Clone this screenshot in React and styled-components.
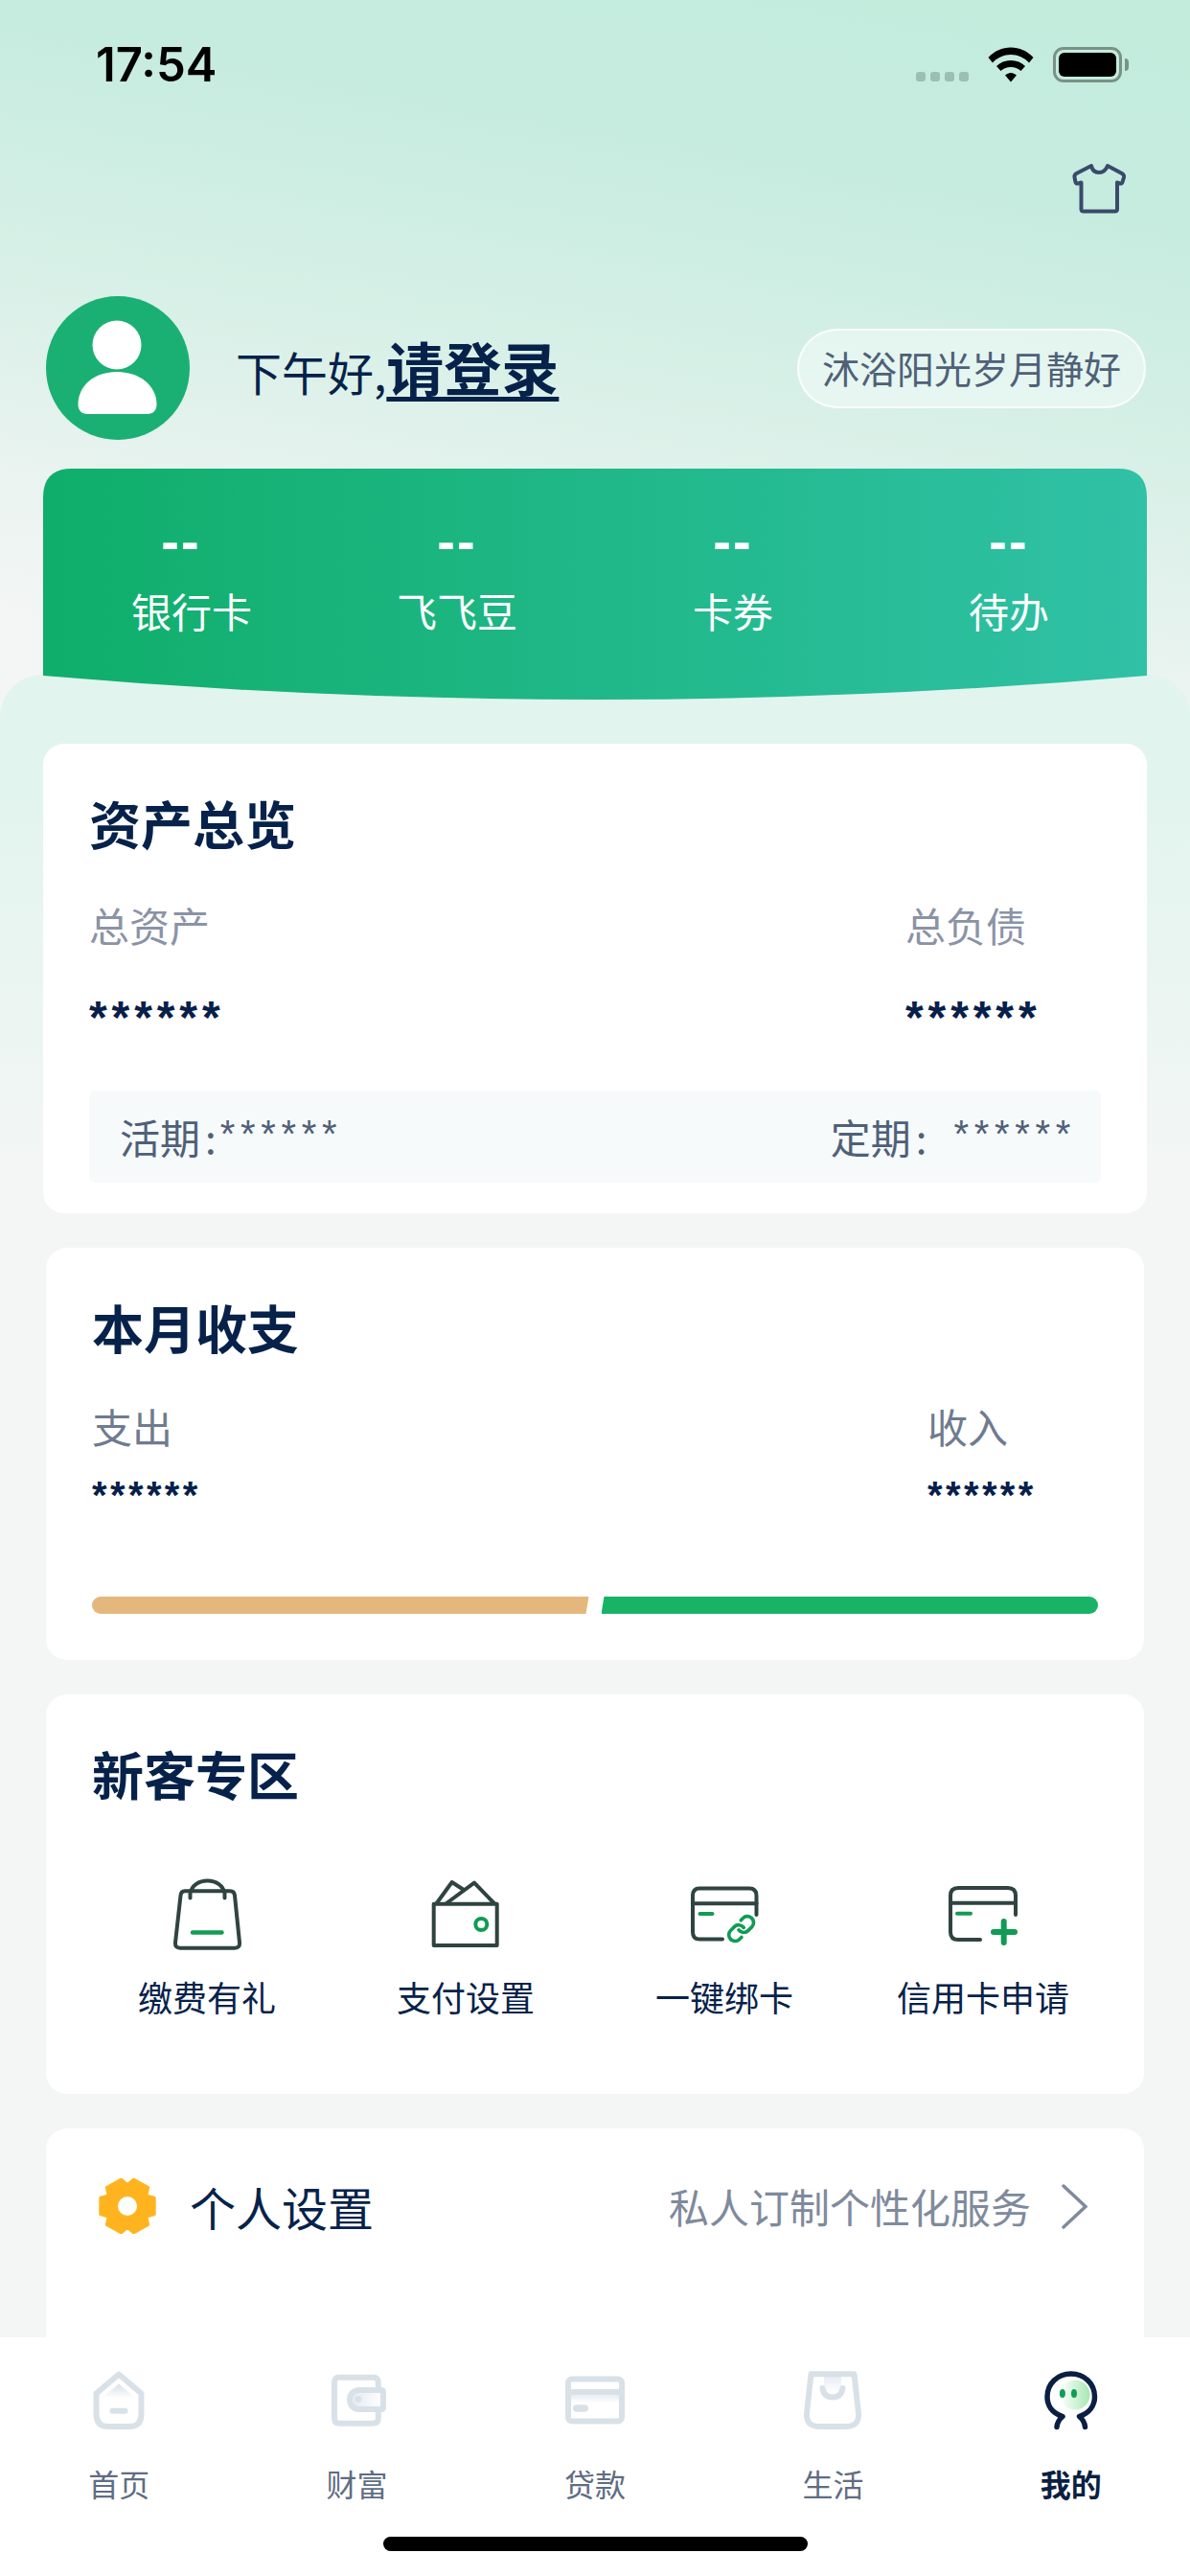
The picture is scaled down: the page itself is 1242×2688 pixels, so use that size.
import React from 'react'
import styled, { createGlobalStyle } from 'styled-components'

const GlobalStyle = createGlobalStyle`
  html, body {
    margin: 0;
    padding: 0;
    background: #f4f6f5;
  }
  * {
    box-sizing: border-box;
  }
  body {
    font-family: "Noto Sans CJK SC", "Noto Sans", sans-serif;
    color: #06224a;
  }
`

const navy = '#06224a'
const iconDark = '#2f4440'
const iconGreen = '#109c52'
const tabGrey = '#d9e1e8'

const Page = styled.div`
  width: 1242px;
  height: 2688px;
  display: flex;
  flex-direction: column;
  overflow: hidden;
  background:
    linear-gradient(190deg, #c3ecdd 0, #c6ecdf 230px, #d8f0e7 490px, #e9f3ef 690px, #f4f6f5 860px) no-repeat;
  background-size: 100% 900px;
  background-color: #f4f6f5;
`

const Main = styled.main`
  flex: 1;
  min-height: 0;
  overflow: hidden;
`

const StatusBar = styled.div`
  height: 130px;
  padding: 44px 71px 0 100px;
  display: flex;
  justify-content: space-between;
  align-items: flex-start;
`

const Time = styled.div`
  font-family: Inter, "Liberation Sans", sans-serif;
  font-weight: 600;
  font-size: 49px;
  line-height: 48px;
  color: #000;
`

const StatusIcons = styled.div`
  display: flex;
  align-items: flex-start;
  padding-top: 5px;
`

const SignalDots = styled.div`
  display: flex;
  gap: 5px;
  margin: 26px 20px 0 0;
`

const SignalDot = styled.span`
  width: 10px;
  height: 10px;
  border-radius: 3px;
  background: #9dbfb2;
`

const Battery = styled.div`
  position: relative;
  width: 72px;
  height: 37px;
  margin-left: 20px;
  padding: 3px;
  border: 3px solid #7a9186;
  border-radius: 11px;

  &::before {
    content: '';
    display: block;
    height: 100%;
    background: #000;
    border-radius: 6px;
  }

  &::after {
    content: '';
    position: absolute;
    right: -10px;
    top: 9px;
    width: 4px;
    height: 13px;
    background: #7a9186;
    border-radius: 0 4px 4px 0;
  }
`

const ActionRow = styled.div`
  margin-top: 40px;
  height: 52px;
  padding-right: 68px;
  display: flex;
  justify-content: flex-end;
`

const Profile = styled.section`
  margin-top: 87px;
  height: 150px;
  padding: 0 48px;
  display: flex;
  align-items: center;
`

const Avatar = styled.div`
  width: 150px;
  height: 150px;
  flex: none;
  border-radius: 50%;
  background: #1bb073;
  display: flex;
  align-items: center;
  justify-content: center;
`

const Greeting = styled.div`
  margin: 0 0 0 48px;
  font-size: 48px;
  line-height: 60px;
  color: ${navy};
  flex: 1;
  white-space: nowrap;
`

const Login = styled.a`
  font-size: 60px;
  font-weight: 700;
  color: ${navy};
  text-decoration: underline;
  text-decoration-thickness: 5px;
  text-underline-offset: 6px;
`

const MoodPill = styled.div`
  height: 83px;
  width: 364px;
  margin-right: -2px;
  padding-bottom: 3px;
  display: flex;
  align-items: center;
  justify-content: center;
  border: 2px solid rgba(255, 255, 255, 0.85);
  border-radius: 42px;
  background: rgba(255, 255, 255, 0.42);
  font-size: 39px;
  color: #4f6078;
`

const StatCard = styled.section`
  position: relative;
  z-index: 1;
  margin: 30px 45px 0;
  height: 241px;
  padding-top: 53px;
  display: grid;
  grid-template-columns: repeat(4, 1fr);
  align-content: start;
  background: linear-gradient(90deg, #0fae6a, #30c1a6);
  clip-path: path('M0 30 Q0 0 30 0 H1122 Q1152 0 1152 30 V216 Q576 266 0 216 Z');
`

const Stat = styled.div`
  display: flex;
  flex-direction: column;
  align-items: center;
  color: #fff;
`

const StatValue = styled.div`
  font-family: "Liberation Sans", sans-serif;
  font-weight: 700;
  font-size: 56px;
  line-height: 46px;
  letter-spacing: 2px;
`

const StatLabel = styled.div`
  margin-top: 19px;
  margin-left: ${({ $shift }) => $shift || 0}px;
  font-size: 42px;
  line-height: 60px;
`

const Sheet = styled.div`
  position: relative;
  margin-top: -26px;
  padding: 72px 45px 0;
  display: flex;
  flex-direction: column;
  gap: 36px;

  &::before {
    content: '';
    position: absolute;
    top: 0;
    left: 0;
    right: 0;
    height: 549px;
    border-radius: 44px;
    background: linear-gradient(180deg, #e2f4ee 0, #e2f4ee 120px, #f4f6f5 549px);
  }
`

const Card = styled.section`
  position: relative;
  margin: 0 ${({ $wide }) => ($wide ? 0 : 3)}px;
  height: ${({ $height }) => $height}px;
  padding: 50px 48px 0;
  background: #fff;
  border-radius: 22px;
`

const CardTitle = styled.h2`
  margin: 0;
  font-size: 54px;
  line-height: 66px;
  font-weight: 700;
  color: ${navy};
`

const Amounts = styled.div`
  display: grid;
  grid-template-columns: ${({ $left }) => $left}px auto;
  margin-top: ${({ $top }) => $top}px;
`

const AmountLabel = styled.div`
  font-size: 42px;
  line-height: 60px;
  color: ${({ $dark }) => ($dark ? '#6f7b8f' : '#8a93a6')};
`

const Stars = styled.div`
  margin-top: ${({ $top }) => $top}px;
  font-family: "Liberation Sans", sans-serif;
  font-weight: 700;
  font-size: ${({ $size }) => $size}px;
  line-height: 40px;
  letter-spacing: ${({ $spacing }) => $spacing}px;
  color: #06204a;
`

const DepositPanel = styled.div`
  margin-top: 56px;
  height: 96px;
  padding: 0 31px 0 32px;
  display: flex;
  justify-content: space-between;
  align-items: center;
  background: #f6fafa;
  border-radius: 6px;
  font-size: 42px;
  color: #4f6078;
`

const Deposit = styled.div`
  display: flex;
  align-items: center;
  line-height: 60px;
`

const Colon = styled.span`
  margin-left: 5px;
`

const DepositStars = styled.span`
  margin-left: ${({ $gap }) => $gap}px;
  margin-right: -5px;
  position: relative;
  top: -3px;
  font-family: "Liberation Sans", sans-serif;
  font-size: 40px;
  letter-spacing: 5.7px;
`

const FlowBar = styled.div`
  margin-top: 86px;
  display: flex;
  gap: 13px;
`

const FlowSegment = styled.div`
  flex: 1;
  height: 18px;
  background: ${({ $tone }) => $tone};
  border-radius: ${({ $end }) => ($end ? '0 9px 9px 0' : '9px 0 0 9px')};
  clip-path: ${({ $end }) =>
    $end
      ? 'polygon(3px 0, 100% 0, 100% 100%, 0 100%)'
      : 'polygon(0 0, 100% 0, calc(100% - 3px) 100%, 0 100%)'};
`

const EntryGrid = styled.div`
  margin: 74px -15px 0;
  display: grid;
  grid-template-columns: repeat(4, 270px);
`

const Entry = styled.div`
  display: flex;
  flex-direction: column;
  align-items: center;
`

const EntryLabel = styled.div`
  margin-top: 20px;
  font-size: 36px;
  line-height: 50px;
  color: ${navy};
  white-space: nowrap;
`

const SettingsRow = styled.div`
  margin: -2px 11px 0 6px;
  display: flex;
  align-items: center;
  height: 66px;
`

const SettingsTitle = styled.div`
  margin-left: 34px;
  flex: 1;
  font-size: 48px;
  line-height: 60px;
  color: ${navy};
`

const SettingsHint = styled.div`
  font-size: 42px;
  line-height: 60px;
  color: #7f8a9d;
`

const Chevron = styled.svg`
  margin-left: 32px;
  flex: none;
`

const TabBar = styled.nav`
  height: 249px;
  flex: none;
  background: #fff;
  padding-top: 33px;
  position: relative;
  z-index: 2;
`

const TabGrid = styled.div`
  display: grid;
  grid-template-columns: repeat(5, 1fr);
`

const Tab = styled.div`
  display: flex;
  flex-direction: column;
  align-items: center;
`

const TabLabel = styled.div`
  margin-top: 33px;
  font-size: 32px;
  line-height: 44px;
  font-weight: ${({ $active }) => ($active ? 700 : 400)};
  color: ${({ $active }) => ($active ? '#0b1f42' : '#5f6d82')};
`

const HomeBar = styled.div`
  width: 443px;
  height: 15px;
  margin: 34px auto 0;
  border-radius: 8px;
  background: #000;
`

const WifiIcon = () => (
  <svg width="48" height="37" viewBox="0 0 48 37">
    <path d="M0.5 11C7 4 15 0.5 24 0.5C33 0.5 41 4 47.5 11L43 16.5C38 11 31 8 24 8C17 8 10 11 5 16.5Z" />
    <path d="M9 20C13 16 18 14 24 14C30 14 35 16 39 20L34.5 25C31.5 22.5 28 21 24 21C20 21 16.5 22.5 13.5 25Z" />
    <path d="M18 29.5C20 28 22 27 24 27C26 27 28 28 30 29.5L24 36.5Z" />
  </svg>
)

const ShirtIcon = () => (
  <svg width="54" height="52" viewBox="0 0 54 52" fill="none" stroke="#3a4a6b" strokeWidth="4" strokeLinejoin="round" overflow="visible">
    <path d="M19 3C20 8 23 10 27 10C31 10 34 8 36 3L51 11Q53.5 12.5 53 15L51.5 20Q51 22 49 21.5L46 20.5V48Q46 50.5 43.5 50.5H11Q8.5 50.5 8.5 48V20.5L5 21.5Q3 22 2.5 20L1.5 15Q1 12.5 3.5 11Z" />
  </svg>
)

const PersonIcon = () => (
  <svg width="84" height="100" viewBox="0 0 84 100" fill="#fff">
    <circle cx="41" cy="26" r="25.5" />
    <path d="M41 54C64 54 82.500 68 82.500 88C82.500 94 79 98 73 98H10C4 98 0.500 94 0.500 88C0.500 68 18 54 41 54Z" />
  </svg>
)

const BagGift = () => (
  <svg width="80" height="80" viewBox="0 0 80 80" fill="none" stroke={iconDark} strokeWidth="4" strokeLinecap="round" strokeLinejoin="round">
    <path d="M17 15.300H64Q68.500 15.300 69 20L74 69Q74.500 74.700 69 74.700H12Q6.500 74.700 7 69L12.500 20Q13 15.300 17 15.300Z" />
    <path d="M22.500 22.500V18C24 9 32 4.500 40.500 4.500C49 4.500 57 9 58.500 18V22.500" />
    <path d="M25 58.500H55.500" stroke={iconGreen} strokeWidth="4.500" />
  </svg>
)

const WalletEntry = () => (
  <svg width="80" height="80" viewBox="0 0 80 80" fill="none" stroke={iconDark} strokeWidth="4" strokeLinecap="round" strokeLinejoin="round">
    <path d="M6.700 28.700H72.700V72H6.700Z" />
    <path d="M9.700 28L25.700 6L38 14" />
    <path d="M20 28L49 6.700L69.700 28" />
    <circle cx="56.300" cy="50" r="6" stroke={iconGreen} />
  </svg>
)

const CardLink = () => (
  <svg width="80" height="80" viewBox="0 0 80 80" fill="none" stroke={iconDark} strokeWidth="4" strokeLinecap="round" strokeLinejoin="round">
    <path d="M73.500 40V20Q73.500 12.500 66 12.500H14Q7 12.500 7 20V58Q7 65.500 14 65.500H38" />
    <path d="M7 28.300H73.500" />
    <path d="M14.500 39H27.500" stroke={iconGreen} />
    <g transform="translate(42 39) scale(1.3)" stroke={iconGreen} strokeWidth="2.800">
      <path d="M10 13a5 5 0 0 0 7.540.540l3-3a5 5 0 0 0-7.070-7.070l-1.720 1.710" />
      <path d="M14 11a5 5 0 0 0-7.540-.540l-3 3a5 5 0 0 0 7.070 7.070l1.710-1.710" />
    </g>
  </svg>
)

const CardPlus = () => (
  <svg width="80" height="80" viewBox="0 0 80 80" fill="none" stroke={iconDark} strokeWidth="4" strokeLinecap="round" strokeLinejoin="round">
    <path d="M74 40V20Q74 12 66 12H14Q6 12 6 20V58Q6 66 14 66H37" />
    <path d="M6 27.700H74" />
    <path d="M13 38.700H27" stroke={iconGreen} />
    <path d="M51 58H73M61.700 47V69" stroke={iconGreen} strokeWidth="6" />
  </svg>
)

// six tooth gear, generated so the teeth stay even
const gearPoints = () => {
  const pts = []
  for (let i = 0; i < 6; i++) {
    const a = (i * Math.PI) / 3
    const w = 0.3
    const at = (r, d) => `${(31 + r * Math.cos(a + d)).toFixed(1)},${(29 + r * 0.97 * Math.sin(a + d)).toFixed(1)}`
    pts.push(at(23, -0.52), at(29.500, -w), at(29.500, w), at(23, 0.52))
  }
  return pts.join(' ')
}

const GearIcon = () => (
  <svg width="62" height="58" viewBox="0 0 62 58" style={{ flex: 'none' }}>
    <polygon points={gearPoints()} fill="#ffb41f" stroke="#ffb41f" strokeWidth="3" strokeLinejoin="round" />
    <ellipse cx="31" cy="29" rx="10" ry="10" fill="#fff" />
  </svg>
)

const fade = (id, from = tabGrey) => (
  <linearGradient id={id} x1="0" y1="0" x2="0" y2="1">
    <stop offset="0" stopColor={from} />
    <stop offset="1" stopColor="#fff" />
  </linearGradient>
)

const TabHome = () => (
  <svg width="64" height="64" viewBox="0 0 64 64" fill="none" stroke={tabGrey} strokeWidth="6" strokeLinecap="round" strokeLinejoin="round">
    <defs>{fade('tabHomeFade')}</defs>
    <path d="M32 15.500L14 30.500H50Z" fill="url(#tabHomeFade)" stroke="none" />
    <path d="M32 5.500L8.500 25.500V47Q8.500 60 21 60H43Q55.500 60 55.500 47V25.500Z" />
    <path d="M25.500 43.700H38.500" />
  </svg>
)

const TabWallet = () => (
  <svg width="64" height="64" viewBox="0 0 64 64" fill="none" stroke={tabGrey} strokeWidth="6" strokeLinecap="round" strokeLinejoin="round">
    <defs>
      <linearGradient id="tabWalletFade" x1="0" y1="0" x2="1" y2="0">
        <stop offset="0" stopColor="#e4e9ee" />
        <stop offset="1" stopColor="#fff" />
      </linearGradient>
    </defs>
    <path d="M53.800 20V14Q53.800 8.700 48.500 8.700H13Q8 8.700 8 14V51Q8 56.700 13 56.700H48.500Q53.800 56.700 53.800 51V45" />
    <path d="M34 22H57Q59 22 59 24V40Q59 42 57 42H34C28 42 24 37.500 24 32C24 26.500 28 22 34 22Z" fill="url(#tabWalletFade)" />
    <circle cx="33" cy="31.500" r="3.500" fill={tabGrey} stroke="none" />
  </svg>
)

const TabCard = () => (
  <svg width="64" height="64" viewBox="0 0 64 64" fill="none">
    <defs>{fade('tabCardFade', '#e8edf1')}</defs>
    <rect x="4" y="10.500" width="56" height="44" rx="4" stroke={tabGrey} strokeWidth="6" />
    <rect x="4" y="21" width="56" height="6.500" fill={tabGrey} />
    <rect x="7" y="27.500" width="50" height="8" fill="url(#tabCardFade)" />
    <rect x="9" y="37.300" width="16" height="7.500" rx="3.700" fill={tabGrey} />
  </svg>
)

const TabBag = () => (
  <svg width="64" height="64" viewBox="0 0 64 64" fill="none" stroke={tabGrey} strokeWidth="6" strokeLinecap="round" strokeLinejoin="round">
    <defs>{fade('tabBagFade', '#e8edf2')}</defs>
    <path d="M23 8H41V20Q40 25 32 25Q24 25 23 20Z" fill="url(#tabBagFade)" stroke="none" />
    <path d="M9.500 5.300H54.500L59 46Q60 60 46 60H18Q4 60 5 46Z" />
    <path d="M21.500 20Q23 29.500 32 29.500Q41 29.500 42.500 20" />
  </svg>
)

const TabMine = () => (
  <svg width="64" height="64" viewBox="0 0 64 64" fill="none">
    <defs>
      <linearGradient id="tabMineFace" x1="0" y1="0" x2="1" y2="0">
        <stop offset="0" stopColor="#fff" />
        <stop offset="1" stopColor="#a5e8b2" />
      </linearGradient>
    </defs>
    <ellipse cx="36" cy="27" rx="15.500" ry="15.500" fill="url(#tabMineFace)" />
    <ellipse cx="22.900" cy="25.500" rx="3" ry="4.500" fill="#0f9d58" />
    <ellipse cx="35" cy="25.500" rx="3" ry="4.500" fill="#0f9d58" />
    <path
      d="M17 60.500C17.500 55 19.500 52.500 23 49.500C12 46 7 38 7 29C7 15 18 5 31.800 5C45.500 5 56.500 15 56.500 29C56.500 38 51 46 40.500 49.500C44 52.500 46 55 46.500 60.500"
      stroke="#0b1f42"
      strokeWidth="5.500"
      strokeLinecap="round"
      strokeLinejoin="round"
    />
  </svg>
)

const stats = [
  { label: '银行卡', shift: 22 },
  { label: '飞飞豆' },
  { label: '卡券' },
  { label: '待办' },
]

const entries = [
  { label: '缴费有礼', Icon: BagGift },
  { label: '支付设置', Icon: WalletEntry },
  { label: '一键绑卡', Icon: CardLink },
  { label: '信用卡申请', Icon: CardPlus },
]

const tabs = [
  { label: '首页', Icon: TabHome },
  { label: '财富', Icon: TabWallet },
  { label: '贷款', Icon: TabCard },
  { label: '生活', Icon: TabBag },
  { label: '我的', Icon: TabMine, active: true },
]

export default function App() {
  return (
    <Page>
      <GlobalStyle />
      <Main>
        <StatusBar>
          <Time>17:54</Time>
          <StatusIcons>
            <SignalDots>
              {[0, 1, 2, 3].map((i) => <SignalDot key={i} />)}
            </SignalDots>
            <WifiIcon />
            <Battery />
          </StatusIcons>
        </StatusBar>

        <ActionRow>
          <ShirtIcon />
        </ActionRow>

        <Profile>
          <Avatar><PersonIcon /></Avatar>
          <Greeting>下午好,<Login>请登录</Login></Greeting>
          <MoodPill>沐浴阳光岁月静好</MoodPill>
        </Profile>

        <StatCard>
          {stats.map((s) => (
            <Stat key={s.label}>
              <StatValue>--</StatValue>
              <StatLabel $shift={s.shift}>{s.label}</StatLabel>
            </Stat>
          ))}
        </StatCard>

        <Sheet>
          <Card $wide $height={490}>
            <CardTitle>资产总览</CardTitle>
            <Amounts $left={852} $top={43}>
              <AmountLabel>总资产</AmountLabel>
              <AmountLabel>总负债</AmountLabel>
              <Stars $top={47} $size={48} $spacing={4.9}>******</Stars>
              <Stars $top={47} $size={48} $spacing={4.9}>******</Stars>
            </Amounts>
            <DepositPanel>
              <Deposit>活期<Colon>:</Colon><DepositStars $gap={4}>******</DepositStars></Deposit>
              <Deposit>定期<Colon>:</Colon><DepositStars $gap={28}>******</DepositStars></Deposit>
            </DepositPanel>
          </Card>

          <Card $height={430}>
            <CardTitle>本月收支</CardTitle>
            <Amounts $left={872} $top={40}>
              <AmountLabel $dark>支出</AmountLabel>
              <AmountLabel $dark>收入</AmountLabel>
              <Stars $top={22} $size={40} $spacing={3.4}>******</Stars>
              <Stars $top={22} $size={40} $spacing={3.4}>******</Stars>
            </Amounts>
            <FlowBar>
              <FlowSegment $tone="#e4b77c" />
              <FlowSegment $tone="#18b365" $end />
            </FlowBar>
          </Card>

          <Card $height={417}>
            <CardTitle>新客专区</CardTitle>
            <EntryGrid>
              {entries.map(({ label, Icon }) => (
                <Entry key={label}>
                  <Icon />
                  <EntryLabel>{label}</EntryLabel>
                </Entry>
              ))}
            </EntryGrid>
          </Card>

          <Card $height={300}>
            <SettingsRow>
              <GearIcon />
              <SettingsTitle>个人设置</SettingsTitle>
              <SettingsHint>私人订制个性化服务</SettingsHint>
              <Chevron width="27" height="47" viewBox="0 0 27 47" fill="none" stroke="#7f8a9d" strokeWidth="3.500" strokeLinecap="round">
                <path d="M2 2L25 23.500L2 45" />
              </Chevron>
            </SettingsRow>
          </Card>
        </Sheet>
      </Main>

      <TabBar>
        <TabGrid>
          {tabs.map(({ label, Icon, active }) => (
            <Tab key={label}>
              <Icon />
              <TabLabel $active={active}>{label}</TabLabel>
            </Tab>
          ))}
        </TabGrid>
        <HomeBar />
      </TabBar>
    </Page>
  )
}
